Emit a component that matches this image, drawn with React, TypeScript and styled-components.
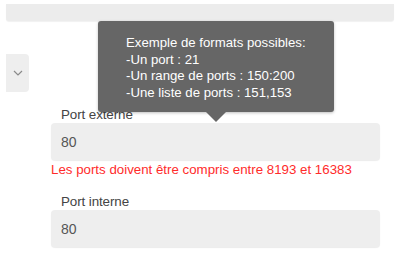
import React from "react";
import styled, { createGlobalStyle } from "styled-components";

const GlobalStyle = createGlobalStyle`
  html, body {
    margin: 0;
    padding: 0;
    background: #ffffff;
    font-family: Arial, "Liberation Sans", sans-serif;
  }
`;

const Page = styled.div`
  position: relative;
  width: 400px;
  height: 255px;
  overflow: hidden;
`;

const TopBar = styled.div`
  margin: 4px 6px 0 6px;
  height: 17px;
  background: #ececec;
  border-radius: 0 0 3px 3px;
  box-shadow: 0 1px 1px rgba(0, 0, 0, 0.06);
`;

const Body = styled.div`
  display: flex;
  align-items: flex-start;
`;

const SideSelect = styled.div`
  margin: 33px 0 0 6px;
  width: 23px;
  height: 38px;
  background: #eeeeee;
  border-radius: 0 4px 4px 0;
  display: flex;
  align-items: center;
  justify-content: center;
  color: #8a8a8a;
`;

const Form = styled.div`
  margin: 86px 0 0 22px;
  width: 329px;
  display: flex;
  flex-direction: column;
`;

const Field = styled.div<{ $top?: number }>`
  display: flex;
  flex-direction: column;
  margin-top: ${(p) => p.$top ?? 0}px;
`;

const Label = styled.label`
  font-size: 13.4px;
  line-height: 16px;
  letter-spacing: -0.1px;
  color: #444;
  padding-left: 10px;
`;

const Input = styled.div`
  height: 37px;
  box-sizing: border-box;
  background: #eeeeee;
  border-radius: 4px;
  box-shadow: 0 1px 1px rgba(0, 0, 0, 0.08);
  padding: 0 10px;
  display: flex;
  align-items: center;
  font-size: 14px;
  color: #555;
`;

const ErrorText = styled.div`
  margin-top: 2px;
  font-size: 13.3px;
  line-height: 16px;
  color: #ff2b2b;
`;

const Tooltip = styled.div`
  position: absolute;
  left: 98px;
  top: 21px;
  width: 236px;
  height: 91px;
  box-sizing: border-box;
  background: #666666;
  border-radius: 3px;
  box-shadow: 0 1px 3px rgba(0, 0, 0, 0.25);
  color: #ffffff;
  font-size: 13.2px;
  line-height: 16.5px;
  padding: 14px 0 0 28px;

  &::after {
    content: "";
    position: absolute;
    left: 108px;
    top: 100%;
    border-left: 10px solid transparent;
    border-right: 10px solid transparent;
    border-top: 10px solid #666666;
  }
`;

const Chevron = () => (
  <svg width="10" height="6" viewBox="0 0 10 6" fill="none">
    <path d="M1 1l4 4 4-4" stroke="currentColor" strokeWidth="1.2" />
  </svg>
);

export default function App() {
  return (
    <Page>
      <GlobalStyle />
      <TopBar />
      <Body>
        <SideSelect>
          <Chevron />
        </SideSelect>
        <Form>
          <Field>
            <Label>Port externe</Label>
            <Input>80</Input>
          </Field>
          <ErrorText>Les ports doivent être compris entre 8193 et 16383</ErrorText>
          <Field $top={16}>
            <Label>Port interne</Label>
            <Input>80</Input>
          </Field>
        </Form>
      </Body>
      <Tooltip>
        Exemple de formats possibles:
        <br />
        -Un port : 21
        <br />
        -Un range de ports : 150:200
        <br />
        -Une liste de ports : 151,153
      </Tooltip>
    </Page>
  );
}
